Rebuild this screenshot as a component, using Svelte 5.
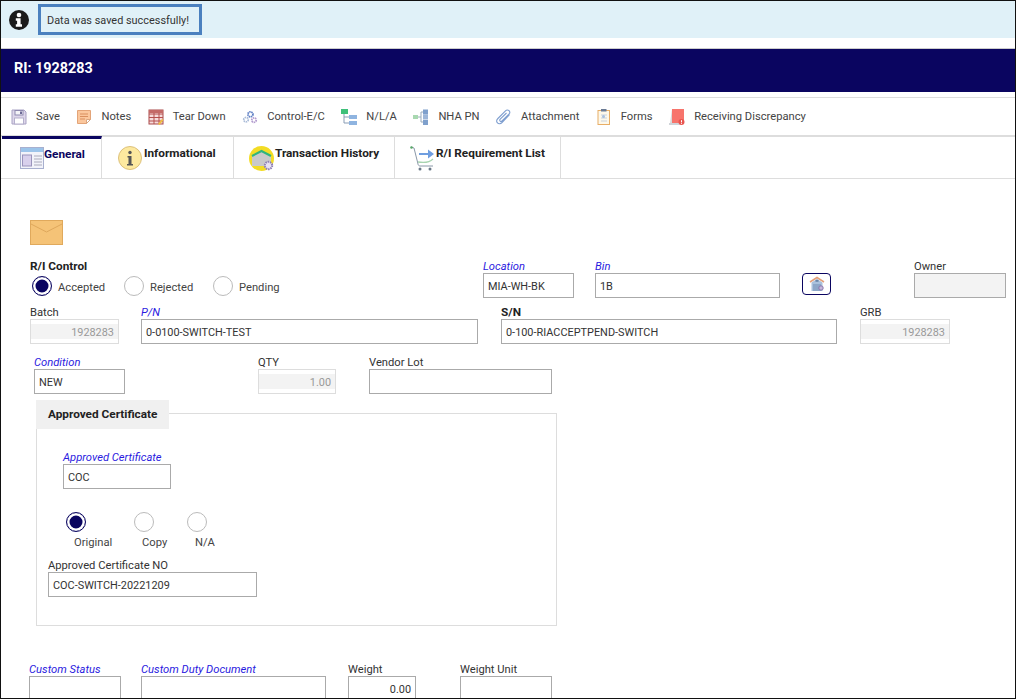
<script>
  const tools = ['Save','Notes','Tear Down','Control-E/C','N/L/A','NHA PN','Attachment','Forms','Receiving Discrepancy'];
</script>

{#snippet icon(name)}
  {#if name === 'Save'}
    <svg class="ti" viewBox="0 0 16 16"><path d="M1 1h12l2 2v12H1z" fill="#ddd6ea" stroke="#a9a3c4"/><rect x="4" y="1.500" width="8" height="4.500" fill="#f4f4f8" stroke="#8f8ab0"/><rect x="9" y="2.500" width="2" height="2.500" fill="#6d6a96"/><rect x="3.500" y="9" width="9" height="6" fill="#fff" stroke="#b5b0cc"/></svg>
  {:else if name === 'Notes'}
    <svg class="ti" viewBox="0 0 16 16"><path d="M1.500 1.500h13v9l-4 4h-9z" fill="#fbc79d" stroke="#e3a478"/><path d="M4 5h8M4 7.500h8M4 10h5" stroke="#d98f5f"/><path d="M14.500 10.500h-4v4z" fill="#fff" stroke="#d9a681"/></svg>
  {:else if name === 'Tear Down'}
    <svg class="ti" viewBox="0 0 16 16"><rect x="1" y="1" width="14" height="14" fill="#f7dcdc" stroke="#a94b4b"/><path d="M1 5h14M1 8.500h14M1 12h14M6 1v14M11 1v14" stroke="#b5504f"/><rect x="1" y="1" width="14" height="3" fill="#c46a68"/><path d="M10 15l4-5 1.500 1-4 5z" fill="#f0c040"/></svg>
  {:else if name === 'Control-E/C'}
    <svg class="ti" viewBox="0 0 18 16"><g fill="none"><circle cx="9.500" cy="5" r="2.800" stroke="#5e7fc4" stroke-width="2" stroke-dasharray="1.600 .7"/><circle cx="4.500" cy="11" r="2.500" stroke="#a9bbd8" stroke-width="2" stroke-dasharray="1.600 .7"/><circle cx="13.500" cy="11.500" r="2.500" stroke="#b39ccf" stroke-width="2" stroke-dasharray="1.600 .7"/></g></svg>
  {:else if name === 'N/L/A'}
    <svg class="ti" viewBox="0 0 16 16"><rect x="0" y="0" width="7" height="5" fill="#3fc07a"/><path d="M3 5v9h5M3 8h5" fill="none" stroke="#8a9db5"/><rect x="8" y="6" width="8" height="4" fill="#8fb4e0"/><rect x="8" y="12" width="8" height="4" fill="#8fb4e0"/></svg>
  {:else if name === 'NHA PN'}
    <svg class="ti" viewBox="0 0 16 16"><rect x="0" y="6" width="5" height="4" fill="#a8d8b0"/><path d="M5 8h3M8 3v10M8 3h2M8 13h2" fill="none" stroke="#9ab"/><rect x="10" y="0.500" width="5" height="5" fill="#7fa0cc"/><rect x="10" y="5.500" width="5" height="5" fill="#9db6d8"/><rect x="10" y="11" width="5" height="5" fill="#7fa0cc"/></svg>
  {:else if name === 'Attachment'}
    <svg class="ti" viewBox="0 0 16 16"><path d="M13.500 5.500L6 13.500c-1.500 1.500-3.500 1.500-4.500.4s-1-3 .4-4.400L9.500 1.800c1-1 2.600-1 3.500-.1s.9 2.500-.1 3.500L6 12c-.6.600-1.400.6-1.900.1s-.4-1.300.1-1.900L10.500 4" fill="none" stroke="#7f9fd0" stroke-width="1.100"/></svg>
  {:else if name === 'Forms'}
    <svg class="ti" viewBox="0 0 14 16"><rect x="1" y="1.500" width="11.500" height="14" fill="#fdf8ea" stroke="#e8ae66"/><rect x="4" y="0" width="5.500" height="2.500" fill="#6a7a94"/><path d="M4 6h6M4 9h6M4 12h6" stroke="#c9d2de"/><circle cx="6.500" cy="7.500" r="1.500" fill="#a8c0df"/></svg>
  {:else}
    <svg class="ti" viewBox="0 0 16 16"><rect x="3" y="0" width="12" height="14" fill="#f7746c"/><rect x="0" y="14" width="12" height="2" fill="#cfd3d8"/><path d="M3 0v14H1z" fill="#d9d9d9"/><circle cx="12.500" cy="13" r="3" fill="#e85550"/><path d="M12.500 11.200v2.200M12.500 14v.8" stroke="#fff"/></svg>
  {/if}
{/snippet}

<div class="page">
  <div class="alert">
    <svg class="info" viewBox="0 0 20 20"><circle cx="10" cy="10" r="10" fill="#1b1b1b"/><circle cx="10" cy="5" r="2.300" fill="#fff"/><path d="M6.800 8.300h4.800v6h1.400v2.400H6.800v-2.400h1.300v-3.600H6.800z" fill="#fff"/></svg>
    <div class="msg"><span>Data was saved successfully!</span></div>
  </div>

  <div class="title"><span>RI: 1928283</span></div>

  <div class="toolbar">
    {#each tools as t}
      <div class="tool">{@render icon(t)}<span>{t}</span></div>
    {/each}
  </div>

  <div class="tabs">
    <div class="tab t1 active">
      <svg class="tabicon" viewBox="0 0 24 22"><rect x=".5" y=".5" width="23" height="21" fill="#f2f3fa" stroke="#a8b0cf"/><rect x="1" y="1" width="22" height="4" fill="#9cc4ea"/><rect x="2.500" y="8" width="9" height="11" fill="#d8d0ec" stroke="#9a94bc"/><path d="M14 9h8M14 12h8M14 15h8M14 18h8" stroke="#aab"/></svg>
      <span>General</span>
    </div>
    <div class="tab t2">
      <svg class="tabicon" viewBox="0 0 24 24"><circle cx="12" cy="12" r="11.500" fill="#fde99f" stroke="#dcc07c"/><circle cx="12" cy="6.500" r="1.700" fill="#555"/><path d="M9.500 10h4v8h1.500v1.500H9V18h1.500v-6.500h-1z" fill="#555"/></svg>
      <span>Informational</span>
    </div>
    <div class="tab t3">
      <svg class="tabicon" viewBox="0 0 26 26"><circle cx="12.500" cy="12.500" r="12.500" fill="#f3dc24"/><path d="M3 10l9.500-5 9.500 5v10H3z" fill="#c9c9c9"/><path d="M3 10l9.500-5 9.500 5" fill="none" stroke="#2fb57d" stroke-width="2"/><circle cx="19.500" cy="19.500" r="3.700" fill="#e8e2f2" stroke="#8f80b5" stroke-width="2" stroke-dasharray="1.500 .8"/></svg>
      <span>Transaction History</span>
    </div>
    <div class="tab t4">
      <svg class="tabicon" viewBox="0 0 26 26"><path d="M1 1l3 1 4 16c0 1 1 2 2 2h13" fill="none" stroke="#8a98a8"/><path d="M8 16c6 1 12 0 15-3" fill="none" stroke="#a8d4b0" stroke-width="1.300"/><circle cx="10" cy="23" r="1.500" fill="#6a7888"/><circle cx="20" cy="23" r="1.500" fill="#6a7888"/><circle cx="1.500" cy="1.500" r="1.300" fill="#5aa86a"/><path d="M9 7h9V3.500L24 8l-6 4.500V9H9z" fill="#6f9ee0"/></svg>
      <span>R/I Requirement List</span>
    </div>
  </div>

  <div class="form">
    <svg class="env" viewBox="0 0 33 25"><rect x=".5" y=".5" width="32" height="24" fill="#f5c377" stroke="#e0a95c"/><path d="M1 4l15.500 8L32 4" fill="none" stroke="#dfa85c"/></svg>

    <div class="row r1">
      <div class="ctl">
        <div class="lab bold">R/I Control</div>
        <div class="radios">
          <span class="radio on"></span><span class="rl l1">Accepted</span>
          <span class="radio"></span><span class="rl l2">Rejected</span>
          <span class="radio"></span><span class="rl">Pending</span>
        </div>
      </div>
      <div class="f w91 loc"><div class="lab req">Location</div><div class="in">MIA-WH-BK</div></div>
      <div class="f w185 bin"><div class="lab req">Bin</div><div class="in">1B</div></div>
      <div class="binbtn"><svg viewBox="0 0 16 16"><path d="M1 6l7-4.500L15 6" fill="none" stroke="#e3a07a" stroke-width="1.500"/><path d="M2.500 6.500L8 3l5.500 3.500V15h-11z" fill="#a9c1dc"/><rect x="6.500" y="3.800" width="3" height="2" fill="#6a85a8"/><rect x="4" y="8" width="8" height="7" fill="#8da7c8"/><circle cx="12" cy="12" r="2.200" fill="#c5b8dc" stroke="#8a78ac"/></svg></div>
      <div class="f w92 own"><div class="lab">Owner</div><div class="in dis"></div></div>
    </div>

    <div class="row r2">
      <div class="f w89"><div class="lab">Batch</div><div class="in ro">1928283</div></div>
      <div class="f w337 pn"><div class="lab req">P/N</div><div class="in">0-0100-SWITCH-TEST</div></div>
      <div class="f w336 sn"><div class="lab bold">S/N</div><div class="in">0-100-RIACCEPTPEND-SWITCH</div></div>
      <div class="f w90 grb"><div class="lab">GRB</div><div class="in ro">1928283</div></div>
    </div>

    <div class="row r3">
      <div class="f w91"><div class="lab req">Condition</div><div class="in">NEW</div></div>
      <div class="f w78 qty"><div class="lab">QTY</div><div class="in ro">1.00</div></div>
      <div class="f w183 vl"><div class="lab">Vendor Lot</div><div class="in"></div></div>
    </div>

    <div class="group">
      <div class="legend">Approved Certificate</div>
      <div class="f w108 cert"><div class="lab req">Approved Certificate</div><div class="in">COC</div></div>
      <div class="crad">
        <div class="ci c1"><span class="radio on"></span><span class="rl">Original</span></div>
        <div class="ci c2"><span class="radio"></span><span class="rl">Copy</span></div>
        <div class="ci c3"><span class="radio"></span><span class="rl">N/A</span></div>
      </div>
      <div class="f w209 certno"><div class="lab">Approved Certificate NO</div><div class="in">COC-SWITCH-20221209</div></div>
    </div>

    <div class="row r4">
      <div class="f w92"><div class="lab req">Custom Status</div><div class="in"></div></div>
      <div class="f w185 duty"><div class="lab req">Custom Duty Document</div><div class="in"></div></div>
      <div class="f w68 wt"><div class="lab">Weight</div><div class="in num">0.00</div></div>
      <div class="f w92 wu"><div class="lab">Weight Unit</div><div class="in"></div></div>
    </div>
  </div>
</div>

<style>
  :global(body) { margin: 0; background: #fff; }
  .page {
    width: 1016px; height: 699px; box-sizing: border-box; overflow: hidden; position: relative;
    border: 1px solid #111;
    font-family: Roboto, "Noto Sans", sans-serif; font-size: 11.200px; color: #333;
  }
  .alert { height: 37px; background: #e0f1f8; display: flex; align-items: center; padding-left: 8px; }
  .info { width: 20px; height: 20px; margin-right: 9px; }
  .msg {
    width: 152px; height: 25px; border: 3px solid #4a80bf; display: flex; align-items: center;
    padding-left: 6px; padding-right: 0; color: #333; white-space: nowrap; font-size: 10.900px;
  }
  .msg span { margin-top: 1px; }
  .title {
    margin-top: 10px; border-top: 1px solid #ccc; height: 43px; background: #0a0560; color: #fff;
    font-weight: 700; font-size: 14.400px; display: flex; align-items: center; padding-left: 13px;
  }
  .title span { margin-top: -4px; }
  .toolbar {
    margin-top: 5px; height: 37px; border-top: 1px solid #ddd; border-bottom: 2px solid #ddd;
    display: flex; align-items: center; padding-left: 10px; gap: 16.500px; box-sizing: content-box;
  }
  .tool { display: flex; align-items: center; gap: 9px; color: #444; white-space: nowrap; }
  .tool span { margin-top: -1px; }
  .ti { width: 16px; height: 16px; display: block; }
  .tabs { display: flex; height: 42px; border-bottom: 1px solid #ddd; padding-left: 1px; margin-top: -1px; }
  .tab {
    display: flex; align-items: flex-start; border-right: 1px solid #ddd; box-sizing: border-box;
    font-weight: 700; color: #222; white-space: nowrap; padding-top: 10px; height: 42px; font-size: 11.800px;
  }
  .tab span { line-height: 14px; }
  .tab.active { border-top: 3px solid #0a0560; padding-top: 7px; color: #0a0560; }
  .tab.active span { margin-top: 1px; }
  .t1 { width: 100px; padding-left: 18px; }
  .t2 { width: 132px; padding-left: 16px; }
  .t2 span { margin-left: 2px; }
  .t3 { width: 161px; padding-left: 15px; }
  .t4 { width: 166px; padding-left: 15px; }
  .tabicon { width: 24px; height: 24px; flex: none; }
  .t3 .tabicon, .t4 .tabicon { width: 26px; height: 26px; }

  .form { padding: 41px 0 0 29px; }
  .env { width: 33px; height: 25px; display: block; }
  .row { display: flex; align-items: flex-start; }
  .lab { height: 14px; line-height: 16px; color: #333; white-space: nowrap; }
  .lab.bold { font-weight: 700; color: #222; font-size: 11.800px; line-height: 14px; }
  .req { font-style: italic; color: #2a1ae0; }
  .in {
    height: 25px; box-sizing: border-box; border: 1px solid #aaa; background: #fff; font-size: 10.900px;
    display: flex; align-items: center; padding: 1px 4px 0; color: #333; white-space: nowrap;
  }
  .ro {
    border-color: #ddd; justify-content: flex-end; color: #999;
    background: linear-gradient(#fff 0 4px, #f3f3f3 4px 19px, #fff 19px);
  }
  .dis { background: #f3f3f3; }
  .num { justify-content: flex-end; }
  .f { flex: none; }
  .w91 { width: 91px; } .w185 { width: 185px; } .w92 { width: 92px; } .w89 { width: 89px; }
  .w337 { width: 337px; } .w336 { width: 336px; } .w90 { width: 90px; } .w78 { width: 78px; }
  .w183 { width: 183px; } .w108 { width: 108px; } .w209 { width: 209px; } .w68 { width: 68px; }

  .r1 { margin-top: 14px; height: 38px; }
  .ctl { width: 452px; flex: none; }
  .radios { display: flex; align-items: center; padding-left: 2px; margin-top: 2px; height: 22px; }
  .radio {
    width: 20px; height: 20px; box-sizing: border-box; border-radius: 50%; border: 1px solid #bbb; background: #fff; flex: none; display: block;
  }
  .radio.on { border-color: #0a0560; box-shadow: inset 0 0 0 2.500px #fff, inset 0 0 0 9px #0a0560; }
  .rl { margin-left: 6px; color: #444; white-space: nowrap; }
  .radios .rl { margin-top: 2px; }
  .l1 { width: 66px; } .l2 { width: 63px; }
  .loc { margin-left: 1px; }
  .bin { margin-left: 21px; }
  .binbtn {
    margin: 14px 0 0 22px; width: 29px; height: 22px; box-sizing: border-box; border: 1px solid #0a0560; border-radius: 4px;
    display: flex; align-items: center; justify-content: center;
  }
  .binbtn svg { width: 16px; height: 16px; }
  .own { margin-left: 83px; }

  .r2 { margin-top: 8px; }
  .pn { margin-left: 22px; } .sn { margin-left: 23px; } .grb { margin-left: 23px; }
  .r3 { margin-top: 11px; margin-left: 4px; }
  .qty { margin-left: 133px; } .vl { margin-left: 33px; }

  .group {
    margin: 19px 0 0 6px; width: 521px; height: 213px; box-sizing: border-box; border: 1px solid #ddd; position: relative;
  }
  .legend {
    position: absolute; left: -1px; top: -14px; width: 133px; height: 29px; box-sizing: border-box;
    background: #f0f0f0; font-weight: 700; font-size: 11.800px; color: #222; padding-left: 12px; line-height: 29px;
  }
  .cert { margin: 36px 0 0 26px; }
  .crad { display: flex; margin-top: 23px; height: 37px; }
  .ci { display: flex; flex-direction: column; align-items: flex-start; flex: none; }
  .ci .radio { margin-bottom: 4px; }
  .ci .rl { margin-left: 8px; line-height: 14px; }
  .c1 { margin-left: 29px; width: 68px; } .c2 { width: 53px; }
  .certno { margin: 9px 0 0 11px; }

  .r4 { margin-top: 36px; margin-left: -1px; }
  .duty { margin-left: 20px; } .wt { margin-left: 22px; } .wu { margin-left: 44px; }
</style>
